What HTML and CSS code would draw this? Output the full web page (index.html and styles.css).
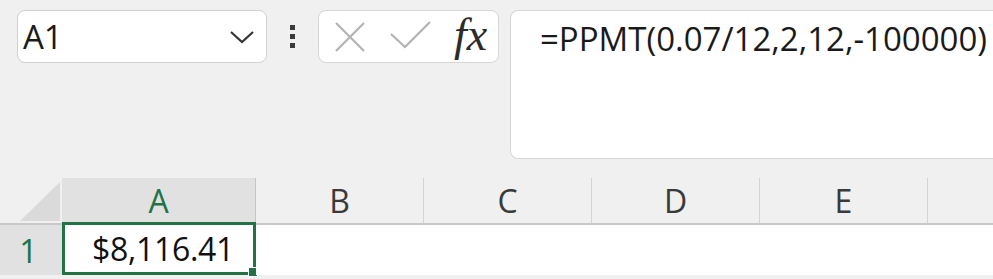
FILE: index.html
```html
<!DOCTYPE html>
<html>
<head>
<meta charset="utf-8">
<link rel="stylesheet" href="styles.css">
</head>
<body>
<div class="topbar">
  <div class="namebox">
    <span class="ref">A1</span>
    <svg class="chev" width="26" height="16" viewBox="0 0 26 16"><path d="M2 3 L13 13 L24 3" fill="none" stroke="#333" stroke-width="2.2"/></svg>
  </div>
  <div class="dots"><i></i><i></i><i></i></div>
  <div class="btns">
    <svg class="x" width="32" height="32" viewBox="0 0 32 32"><path d="M2 2 L30 30 M30 2 L2 30" stroke="#b3b3b3" stroke-width="2.2" fill="none"/></svg>
    <svg class="check" width="42" height="30" viewBox="0 0 42 30"><path d="M1 14 L15 27 L40 2" stroke="#b3b3b3" stroke-width="2.2" fill="none"/></svg>
    <span class="fx">fx</span>
  </div>
  <div class="formula">=PPMT(0.07/12,2,12,-100000)</div>
</div>
<div class="grid">
  <div class="hrow">
    <div class="corner"><div class="tri"></div></div>
    <div class="ch sel colA">A</div>
    <div class="ch col">B</div>
    <div class="ch col">C</div>
    <div class="ch col">D</div>
    <div class="ch col">E</div>
    <div class="ch rest"></div>
  </div>
  <div class="row">
    <div class="rh sel">1</div>
    <div class="cell colA active">$8,116.41<span class="handle"></span></div>
    <div class="cell rest"></div>
  </div>
</div>
</body>
</html>
```
FILE: styles.css
```css
html, body {
  margin: 0;
  padding: 0;
  background: #f0f0f0;
  font-family: "Open Sans", "Noto Sans", sans-serif;
  color: #1f1f1f;
  overflow: hidden;
  width: 993px;
  height: 279px;
}
.topbar {
  display: flex;
  align-items: flex-start;
  padding: 10px 0 0 17px;
  height: 149px;
  overflow: hidden;
}
.namebox {
  box-sizing: border-box;
  flex: none;
  width: 250px;
  height: 53px;
  background: #fff;
  border: 1px solid #d1d1d1;
  border-radius: 8px;
  display: flex;
  align-items: center;
  justify-content: space-between;
  padding: 0 11px 0 5px;
}
.ref {
  font-size: 33px;
  line-height: 1;
  color: #1a1a1a;
}
.dots {
  flex: none;
  width: 51px;
  height: 53px;
  display: flex;
  flex-direction: column;
  align-items: center;
  justify-content: center;
  gap: 4px;
}
.dots i {
  display: block;
  width: 5px;
  height: 5px;
  background: #3a3a3a;
}
.btns {
  flex: none;
  box-sizing: border-box;
  width: 181px;
  height: 53px;
  background: #fff;
  border: 1px solid #d6d6d6;
  border-radius: 8px;
  display: flex;
  align-items: center;
  padding-left: 15px;
}
.btns .x { margin-right: 24px; }
.btns .check { margin-right: 22px; margin-top: -4px; }
.fx {
  font-family: "Liberation Serif", "Times New Roman", serif;
  font-style: italic;
  font-size: 46px;
  line-height: 46px;
  height: 46px;
  margin-top: -4px;
  color: #2b2b2b;
}
.formula {
  box-sizing: border-box;
  flex: none;
  margin-left: 11px;
  width: 483px;
  height: 149px;
  background: #fff;
  border: 1px solid #d6d6d6;
  border-right: none;
  border-radius: 8px 0 0 8px;
  padding: 6px 0 0 29px;
  font-size: 33px;
  line-height: 44px;
  color: #1a1a1a;
  white-space: nowrap;
  overflow: hidden;
}
.grid {
  padding-top: 18px;
}
.hrow {
  display: flex;
  height: 46px;
  border-bottom: 2px solid #c9c9c9;
  overflow: hidden;
}
.corner {
  width: 62px;
  flex: none;
  position: relative;
}
.tri {
  position: absolute;
  right: 2px;
  bottom: 2px;
  width: 0;
  height: 0;
  border-style: solid;
  border-width: 0 0 39px 40px;
  border-color: transparent transparent #dadada transparent;
}
.ch {
  flex: none;
  box-sizing: border-box;
  display: flex;
  align-items: center;
  justify-content: center;
  font-size: 32px;
  color: #3a3a3a;
  border-right: 1px solid #d4d4d4;
  margin-top: 1px;
}
.colA { width: 194px; }
.col { width: 168px; }
.ch.rest, .cell.rest { flex: 1 1 auto; border-right: none; }
.ch.sel {
  background: #e1e1e1;
  color: #217346;
  border-right: 1px solid #c6c6c6;
}
.row {
  display: flex;
  height: 50px;
}
.rh {
  width: 62px;
  flex: none;
  box-sizing: border-box;
  display: flex;
  align-items: center;
  justify-content: center;
  font-size: 32px;
  padding-right: 5px;
}
.rh.sel {
  background: #e1e1e1;
  color: #217346;
}
.cell {
  flex: none;
  box-sizing: border-box;
  background: #fff;
  font-size: 32px;
  display: flex;
  align-items: center;
  justify-content: flex-end;
  position: relative;
}
.cell.active {
  border: 3px solid #217346;
  margin-top: -3px;
  height: 53px;
  padding-right: 19px;
  color: #111;
  letter-spacing: -0.3px;
}
.handle {
  position: absolute;
  right: -5px;
  bottom: -5px;
  width: 8px;
  height: 8px;
  background: #217346;
  border: 1px solid #fff;
}
```
